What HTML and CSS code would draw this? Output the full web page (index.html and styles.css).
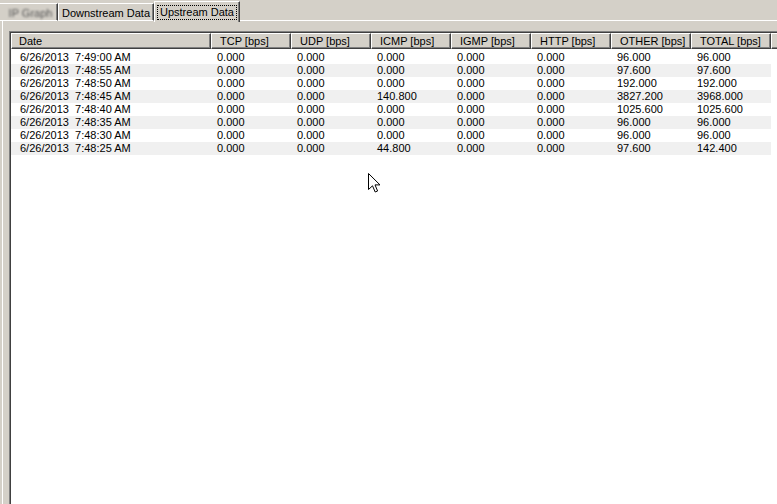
FILE: index.html
```html
<!DOCTYPE html>
<html>
<head>
<meta charset="utf-8">
<link rel="stylesheet" href="styles.css">
</head>
<body>
<div class="window">
  <div class="tabs">
    <div class="tab tab-blur"><span class="blurtext">IP Graph</span></div>
    <div class="tab tab-down">Downstream Data</div>
    <div class="tab active"><span class="focus">Upstream Data</span></div>
    <div class="tab-fill"></div>
  </div>
  <div class="panel">
    <div class="list">
      <table class="grid">
        <colgroup>
          <col class="c-date"><col class="c-num"><col class="c-num"><col class="c-num"><col class="c-num"><col class="c-num"><col class="c-num"><col class="c-num"><col class="c-rest">
        </colgroup>
        <thead>
          <tr>
            <th class="h-date">Date</th><th>TCP [bps]</th><th>UDP [bps]</th><th>ICMP [bps]</th><th>IGMP [bps]</th><th>HTTP [bps]</th><th>OTHER [bps]</th><th>TOTAL [bps]</th><th class="h-rest"></th>
          </tr>
        </thead>
        <tbody>
          <tr class="spacer"><td colspan="9"></td></tr>
          <tr><td class="d">6/26/2013  7:49:00 AM</td><td>0.000</td><td>0.000</td><td>0.000</td><td>0.000</td><td>0.000</td><td>96.000</td><td>96.000</td><td class="rest"></td></tr>
          <tr class="alt"><td class="d">6/26/2013  7:48:55 AM</td><td>0.000</td><td>0.000</td><td>0.000</td><td>0.000</td><td>0.000</td><td>97.600</td><td>97.600</td><td class="rest"></td></tr>
          <tr><td class="d">6/26/2013  7:48:50 AM</td><td>0.000</td><td>0.000</td><td>0.000</td><td>0.000</td><td>0.000</td><td>192.000</td><td>192.000</td><td class="rest"></td></tr>
          <tr class="alt"><td class="d">6/26/2013  7:48:45 AM</td><td>0.000</td><td>0.000</td><td>140.800</td><td>0.000</td><td>0.000</td><td>3827.200</td><td>3968.000</td><td class="rest"></td></tr>
          <tr><td class="d">6/26/2013  7:48:40 AM</td><td>0.000</td><td>0.000</td><td>0.000</td><td>0.000</td><td>0.000</td><td>1025.600</td><td>1025.600</td><td class="rest"></td></tr>
          <tr class="alt"><td class="d">6/26/2013  7:48:35 AM</td><td>0.000</td><td>0.000</td><td>0.000</td><td>0.000</td><td>0.000</td><td>96.000</td><td>96.000</td><td class="rest"></td></tr>
          <tr><td class="d">6/26/2013  7:48:30 AM</td><td>0.000</td><td>0.000</td><td>0.000</td><td>0.000</td><td>0.000</td><td>96.000</td><td>96.000</td><td class="rest"></td></tr>
          <tr class="alt"><td class="d">6/26/2013  7:48:25 AM</td><td>0.000</td><td>0.000</td><td>44.800</td><td>0.000</td><td>0.000</td><td>97.600</td><td>142.400</td><td class="rest"></td></tr>
        </tbody>
      </table>
    </div>
  </div>
  <svg class="cursor" width="14" height="21" viewBox="0 0 14 21">
    <path d="M0.5 0.5 L0.5 16.5 L4.5 12.8 L7.2 19 L9.6 18 L7 11.9 L12 11.9 Z" fill="#fff" stroke="#000" stroke-width="1" stroke-linejoin="miter"/>
  </svg>
</div>
</body>
</html>
```

FILE: styles.css
```css
html, body {
  margin: 0;
  padding: 0;
  width: 777px;
  height: 504px;
  overflow: hidden;
  background: #d4d0c8;
  font-family: "Liberation Sans", Arial, sans-serif;
  font-size: 11px;
  color: #000;
}

.window {
  position: relative;
  width: 777px;
  height: 504px;
  overflow: hidden;
}

.tabs {
  display: flex;
  align-items: flex-end;
  height: 21px;
}

.tab {
  box-sizing: border-box;
  height: 18px;
  padding: 2px 0 0 0;
  border-top: 1px solid #fff;
  border-left: 1px solid #fff;
  border-right: 1px solid #404040;
  box-shadow: inset -1px 0 0 #808080;
  border-bottom: 1px solid #fff;
  line-height: 14px;
  white-space: nowrap;
  text-align: center;
}

.tab-blur {
  width: 58px;
  padding-left: 4px;
  border-left: none;
}

.tab-down {
  width: 96px;
}

.blurtext {
  filter: blur(1.3px);
  color: #555;
}

.tab.active {
  height: 21px;
  width: 86px;
  padding: 3px 0 0 0;
  border-bottom: none;
  margin-bottom: -1px;
  position: relative;
  z-index: 1;
  background: #d4d0c8;
}

.focus {
  display: inline-block;
  border: 1px dotted #000;
  padding: 0 2px;
  line-height: 13px;
}

.tab-fill {
  flex: 1;
  height: 1px;
  background: #fff;
}

.panel {
  box-sizing: border-box;
  height: 483px;
  margin-left: 2px;
  border-left: 1px solid #fff;
  padding: 10px 0 0 6px;
}

.list {
  box-sizing: border-box;
  width: 800px;
  height: 480px;
  border-top: 1px solid #808080;
  border-left: 1px solid #808080;
  box-shadow: inset 1px 1px 0 #404040;
  padding: 1px 0 0 1px;
  background: #fff;
}

.grid {
  table-layout: fixed;
  border-collapse: separate;
  border-spacing: 0;
  width: 799px;
}

.c-date { width: 200px; }
.c-num { width: 80px; }
.c-rest { width: 39px; }

.grid th {
  box-sizing: border-box;
  height: 16px;
  padding: 0 0 0 8px;
  text-align: left;
  font-weight: normal;
  background: #d4d0c8;
  border-top: 1px solid #fff;
  border-left: 1px solid #fff;
  border-right: 1px solid #404040;
  border-bottom: 1px solid #404040;
  box-shadow: inset -1px -1px 0 #808080;
  line-height: 13px;
  white-space: nowrap;
}

.grid th.h-date { padding-left: 7px; }

.grid tr.spacer td {
  height: 2px;
  padding: 0;
  line-height: 0;
}

.grid td {
  height: 13px;
  padding: 0 0 0 6px;
  line-height: 13px;
  white-space: nowrap;
}

.grid td.d {
  padding-left: 9px;
  white-space: pre;
}

.grid tr.alt td { background: #f0f0f0; }
.grid tr.alt td.rest { background: #fff; }

.cursor {
  position: absolute;
  left: 368px;
  top: 173px;
}
```
